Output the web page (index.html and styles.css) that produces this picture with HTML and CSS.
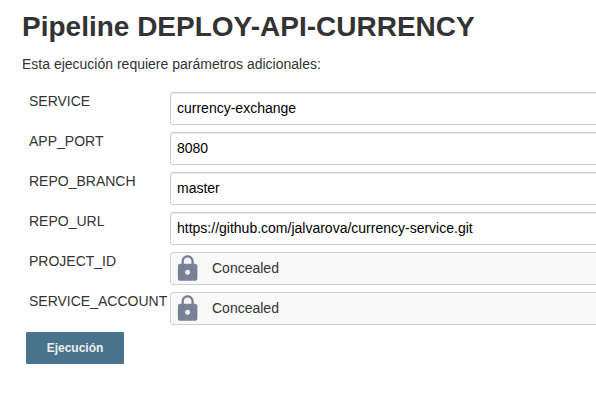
FILE: index.html
```html
<!DOCTYPE html>
<html lang="es">
<head>
<meta charset="utf-8">
<title>Pipeline DEPLOY-API-CURRENCY</title>
<link rel="stylesheet" href="styles.css">
</head>
<body>
<main class="page">
  <h1 class="title">Pipeline DEPLOY-API-CURRENCY</h1>
  <p class="intro">Esta ejecución requiere parámetros adicionales:</p>
  <form class="form">
    <div class="row"><label class="label">SERVICE</label><div class="field">currency-exchange</div></div>
    <div class="row"><label class="label">APP_PORT</label><div class="field">8080</div></div>
    <div class="row"><label class="label">REPO_BRANCH</label><div class="field">master</div></div>
    <div class="row"><label class="label">REPO_URL</label><div class="field">https://github.com/jalvarova/currency-service.git</div></div>
    <div class="row"><label class="label">PROJECT_ID</label><div class="field concealed"><svg class="lock" viewBox="0 0 24 24"><path d="M18 8h-1V6c0-2.76-2.24-5-5-5S7 3.240 7 6v2H6c-1.100 0-2 .9-2 2v10c0 1.100.9 2 2 2h12c1.100 0 2-.9 2-2V10c0-1.100-.9-2-2-2zm-6 9c-1.100 0-2-.9-2-2s.9-2 2-2 2 .9 2 2-.9 2-2 2zm3.100-9H8.900V6c0-1.710 1.390-3.100 3.100-3.100s3.100 1.390 3.100 3.100v2z"/></svg>Concealed</div></div>
    <div class="row"><label class="label">SERVICE_ACCOUNT</label><div class="field concealed"><svg class="lock" viewBox="0 0 24 24"><path d="M18 8h-1V6c0-2.76-2.24-5-5-5S7 3.240 7 6v2H6c-1.100 0-2 .9-2 2v10c0 1.100.9 2 2 2h12c1.100 0 2-.9 2-2V10c0-1.100-.9-2-2-2zm-6 9c-1.100 0-2-.9-2-2s.9-2 2-2 2 .9 2 2-.9 2-2 2zm3.100-9H8.900V6c0-1.710 1.390-3.100 3.100-3.100s3.100 1.390 3.100 3.100v2z"/></svg>Concealed</div></div>
    <button class="submit" type="button">Ejecución</button>
  </form>
</main>
</body>
</html>
```

FILE: styles.css
```css
* { box-sizing: border-box; }
body {
  margin: 0;
  background: #fff;
  color: #333;
  font: 14px/20px "Liberation Sans", Arial, sans-serif;
  overflow: hidden;
}
.page { padding: 10px 0 0 22px; }
.title { margin: 0; font-size: 28px; line-height: 34px; font-weight: 700; }
.intro { margin: 10px 0 18px; }
.form { padding-left: 4px; }
.row {
  display: grid;
  grid-template: 33px / 144px 1fr;
  margin-bottom: 7px;
}
.label { padding-left: 3px; line-height: 18px; white-space: nowrap; }
.field {
  display: flex;
  align-items: center;
  margin-right: -10px;
  padding: 0 6px 1px;
  border: 1px solid #ccc;
  border-radius: 3px;
  box-shadow: inset 0 1px 1px rgba(0, 0, 0, .075);
  color: #000;
}
.concealed { background: #f9f9f9; color: #333; box-shadow: none; }
.lock { width: 29.3px; height: 29.3px; margin: 1px 9.6px -1px -3.9px; fill: #788195; }
.submit {
  display: block;
  width: 98px;
  height: 32px;
  padding: 0;
  border: 1px solid #437a95;
  border-radius: 1px;
  background: #49728b;
  color: #eee;
  font: 700 12px/30px "Liberation Sans", Arial, sans-serif;
}
```
